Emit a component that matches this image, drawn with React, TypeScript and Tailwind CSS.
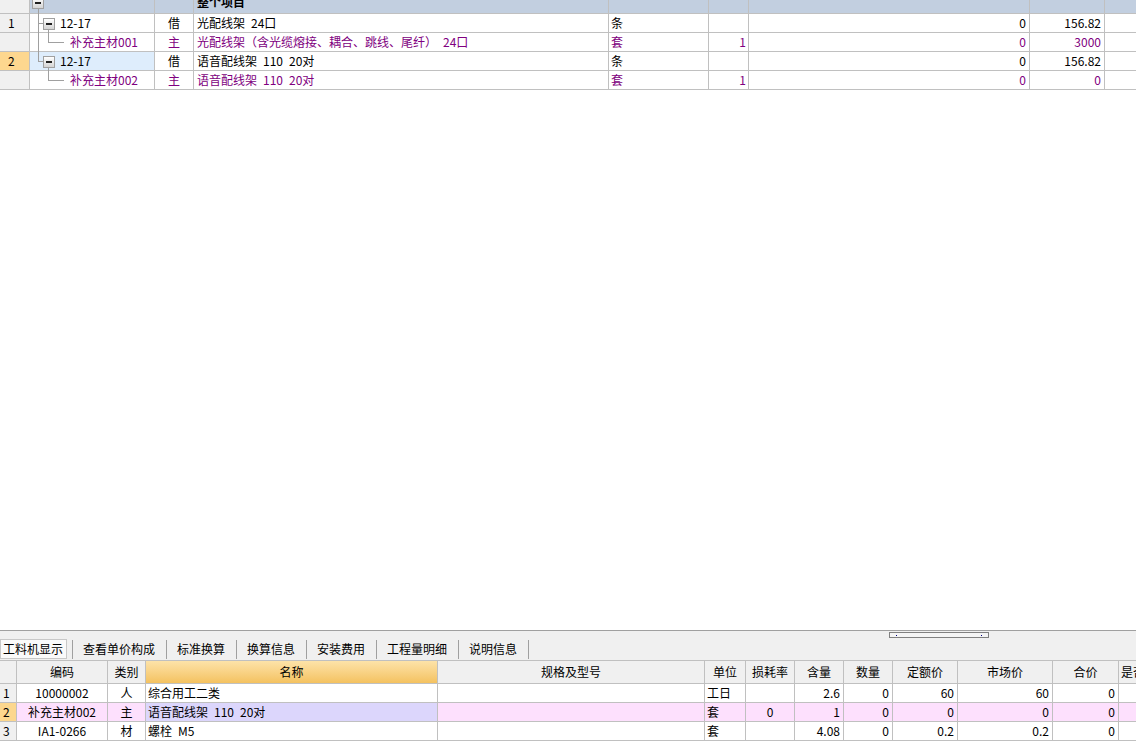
import React from 'react'

const LINE = 'absolute bg-[#a0a0a0]'
// SimSun-like wide spaces between words
const sp = (s: string) => s.replace(/ /g, '\u2002')

function MinusBox({ className }: { className: string }) {
    return (
        <span className={`absolute w-[12px] h-[12px] border border-[#a0a0a0] bg-gradient-to-b from-white to-[#d4d4d4] flex items-center justify-center ${className}`}>
            <span className="w-[6px] h-[2px] bg-[#202020]" />
        </span>
    )
}

type TopRow = {
    num: string
    selected?: boolean
    kind: 'parent' | 'child'
    last: boolean
    code: string
    type: string
    name: string
    unit: string
    qty: string
    amount: string
    price: string
    purple?: boolean
}

const topRows: TopRow[] = [
    { num: '1', kind: 'parent', last: false, code: '12-17', type: '借', name: '光配线架 24口', unit: '条', qty: '', amount: '0', price: '156.82' },
    { num: '', kind: 'child', last: false, code: '补充主材001', type: '主', name: '光配线架（含光缆熔接、耦合、跳线、尾纤） 24口', unit: '套', qty: '1', amount: '0', price: '3000', purple: true },
    { num: '2', selected: true, kind: 'parent', last: true, code: '12-17', type: '借', name: '语音配线架 110 20对', unit: '条', qty: '', amount: '0', price: '156.82' },
    { num: '', kind: 'child', last: true, code: '补充主材002', type: '主', name: '语音配线架 110 20对', unit: '套', qty: '1', amount: '0', price: '0', purple: true },
]

const topCols = 'grid grid-cols-[30px_125px_39px_415px_100px_40px_281px_75px_1fr]'
const cell = 'border-r border-b border-[#c0c0c0] h-[19px] leading-[18px] whitespace-nowrap overflow-hidden'

function TreeCell({ row }: { row: TopRow }) {
    const bg = row.selected ? 'bg-[#deedfc]' : 'bg-white'
    return (
        <div className={`${cell} relative overflow-visible ${bg}`}>
            {row.kind === 'parent' ? (
                <>
                    {row.last ? (
                        <span className={`${LINE} left-[8px] top-0 w-px h-[10px]`} />
                    ) : (
                        <span className={`${LINE} left-[8px] top-0 -bottom-px w-px`} />
                    )}
                    <span className={`${LINE} left-[8px] top-[9px] w-[5px] h-px`} />
                    <MinusBox className="left-[13px] top-[4px]" />
                    <span className={`${LINE} left-[18px] top-[16px] -bottom-px w-px`} />
                    <span className="pl-[30px]">{row.code}</span>
                </>
            ) : (
                <>
                    {!row.last && <span className={`${LINE} left-[8px] top-0 -bottom-px w-px`} />}
                    <span className={`${LINE} left-[18px] top-0 w-px h-[10px]`} />
                    <span className={`${LINE} left-[18px] top-[9px] w-[16px] h-px`} />
                    <span className="pl-[40px]">{row.code}</span>
                </>
            )}
        </div>
    )
}

function TopTable() {
    return (
        <div className="h-[630px] bg-white">
            <div className={`${topCols} h-[14px]`}>
                <div className="border-r border-b border-[#c0c0c0] bg-[#f0f0f0]" />
                <div className="border-r border-b border-[#c0c0c0] bg-[#c2cfe0] relative">
                    <MinusBox className="left-[2px] -top-[3px]" />
                    <span className={`${LINE} left-[8px] top-[9px] -bottom-px w-px`} />
                </div>
                <div className="border-r border-b border-[#c0c0c0] bg-[#c2cfe0]" />
                <div className="border-r border-b border-[#c0c0c0] bg-[#c2cfe0] overflow-hidden">
                    <span className="block -mt-[7px] pl-[3px] leading-[18px] font-bold">整个项目</span>
                </div>
                <div className="border-r border-b border-[#c0c0c0] bg-[#c2cfe0]" />
                <div className="border-r border-b border-[#c0c0c0] bg-[#c2cfe0]" />
                <div className="border-r border-b border-[#c0c0c0] bg-[#c2cfe0]" />
                <div className="border-r border-b border-[#c0c0c0] bg-[#c2cfe0]" />
                <div className="border-b border-[#c0c0c0] bg-[#c2cfe0]" />
            </div>
            {topRows.map((r, i) => (
                <div key={i} className={`${topCols} ${r.purple ? 'text-[#800080]' : 'text-black'}`}>
                    <div className={`${cell} pl-[8px] text-black ${r.selected ? 'bg-[#fdd78f]' : 'bg-[#f0f0f0]'}`}>{r.num}</div>
                    <TreeCell row={r} />
                    <div className={`${cell} text-center`}>{r.type}</div>
                    <div className={`${cell} pl-[3px]`}>{sp(r.name)}</div>
                    <div className={`${cell} pl-[2px]`}>{r.unit}</div>
                    <div className={`${cell} text-right pr-[2px]`}>{r.qty}</div>
                    <div className={`${cell} text-right pr-[3px]`}>{r.amount}</div>
                    <div className={`${cell} text-right pr-[3px]`}>{r.price}</div>
                    <div className={`${cell} border-r-0`} />
                </div>
            ))}
        </div>
    )
}

const tabs = ['查看单价构成', '标准换算', '换算信息', '安装费用', '工程量明细', '说明信息']

function TabBar() {
    return (
        <div className="relative h-[30px] border-t border-[#a0a0a0] bg-[#f0f0f0] flex items-start pt-[8px]">
            <div className="w-[67px] h-[20px] leading-[18px] border border-[#c8c8c8] bg-[#fafafa] pl-[2px] whitespace-nowrap">工料机显示</div>
            <div className="ml-[5px] mt-px w-px h-[19px] bg-[#a0a0a0]" />
            {tabs.map((t) => (
                <React.Fragment key={t}>
                    <div className="pl-[10px] pr-[11px] h-[20px] leading-[20px] whitespace-nowrap">{t}</div>
                    <div className="mt-px w-px h-[19px] bg-[#a0a0a0]" />
                </React.Fragment>
            ))}
            <div className="absolute left-[889px] top-[1px] w-[100px] h-[6px] border border-[#808080] bg-[#f4f4f4]">
                <span className="absolute left-[6px] top-[2px] w-px h-px bg-[#000080]" />
                <span className="absolute left-[91px] top-[2px] w-px h-px bg-[#000080]" />
            </div>
        </div>
    )
}

const botCols = 'grid grid-cols-[17px_91px_38px_292px_267px_41px_49px_49px_49px_65px_95px_66px_1fr]'
const headers = ['', '编码', '类别', '名称', '规格及型号', '单位', '损耗率', '含量', '数量', '定额价', '市场价', '合价']

type BotRow = { num: string; code: string; type: string; name: string; unit: string; loss: string; content: string; qty: string; quota: string; market: string; total: string; selected?: boolean }

const botRows: BotRow[] = [
    { num: '1', code: '10000002', type: '人', name: '综合用工二类', unit: '工日', loss: '', content: '2.6', qty: '0', quota: '60', market: '60', total: '0' },
    { num: '2', code: '补充主材002', type: '主', name: '语音配线架 110 20对', unit: '套', loss: '0', content: '1', qty: '0', quota: '0', market: '0', total: '0', selected: true },
    { num: '3', code: 'IA1-0266', type: '材', name: '螺栓 M5', unit: '套', loss: '', content: '4.08', qty: '0', quota: '0.2', market: '0.2', total: '0' },
]

function BottomTable() {
    const hcell = 'border-r border-b border-[#c0c0c0] h-[23px] leading-[22px] text-center whitespace-nowrap overflow-hidden'
    return (
        <div className="border-t border-[#c0c0c0]">
            <div className={`${botCols} bg-[#f0f0f0]`}>
                {headers.map((h, i) => (
                    <div key={i} className={`${hcell} ${h === '名称' ? 'bg-gradient-to-b from-[#fde3a8] to-[#f4c25f]' : ''}`}>{h}</div>
                ))}
                <div className="border-b border-[#c0c0c0] h-[23px] leading-[22px] pl-[2px] whitespace-nowrap overflow-hidden">是否计价</div>
            </div>
            {botRows.map((r) => {
                const bg = r.selected ? 'bg-[#fde0fd]' : 'bg-white'
                const c = `${cell} ${bg}`
                return (
                    <div key={r.num} className={botCols}>
                        <div className={`${cell} pl-[3px] ${r.selected ? 'bg-[#fcd78e]' : 'bg-[#f0f0f0]'}`}>{r.num}</div>
                        <div className={`${c} text-center`}>{r.code}</div>
                        <div className={`${c} text-center`}>{r.type}</div>
                        <div className={`${cell} pl-[2px] ${r.selected ? 'bg-[#dcd6fc]' : 'bg-white'}`}>{sp(r.name)}</div>
                        <div className={c} />
                        <div className={`${c} pl-[2px]`}>{r.unit}</div>
                        <div className={`${c} text-center`}>{r.loss}</div>
                        <div className={`${c} text-right pr-[3px]`}>{r.content}</div>
                        <div className={`${c} text-right pr-[3px]`}>{r.qty}</div>
                        <div className={`${c} text-right pr-[3px]`}>{r.quota}</div>
                        <div className={`${c} text-right pr-[3px]`}>{r.market}</div>
                        <div className={`${c} text-right pr-[3px]`}>{r.total}</div>
                        <div className={`${c} border-r-0`} />
                    </div>
                )
            })}
        </div>
    )
}

export default function App() {
    return (
        <div className="w-[1136px] h-[748px] overflow-hidden bg-white text-[12px] text-black font-['Noto_Sans_CJK_SC',sans-serif]">
            <TopTable />
            <TabBar />
            <BottomTable />
        </div>
    )
}
